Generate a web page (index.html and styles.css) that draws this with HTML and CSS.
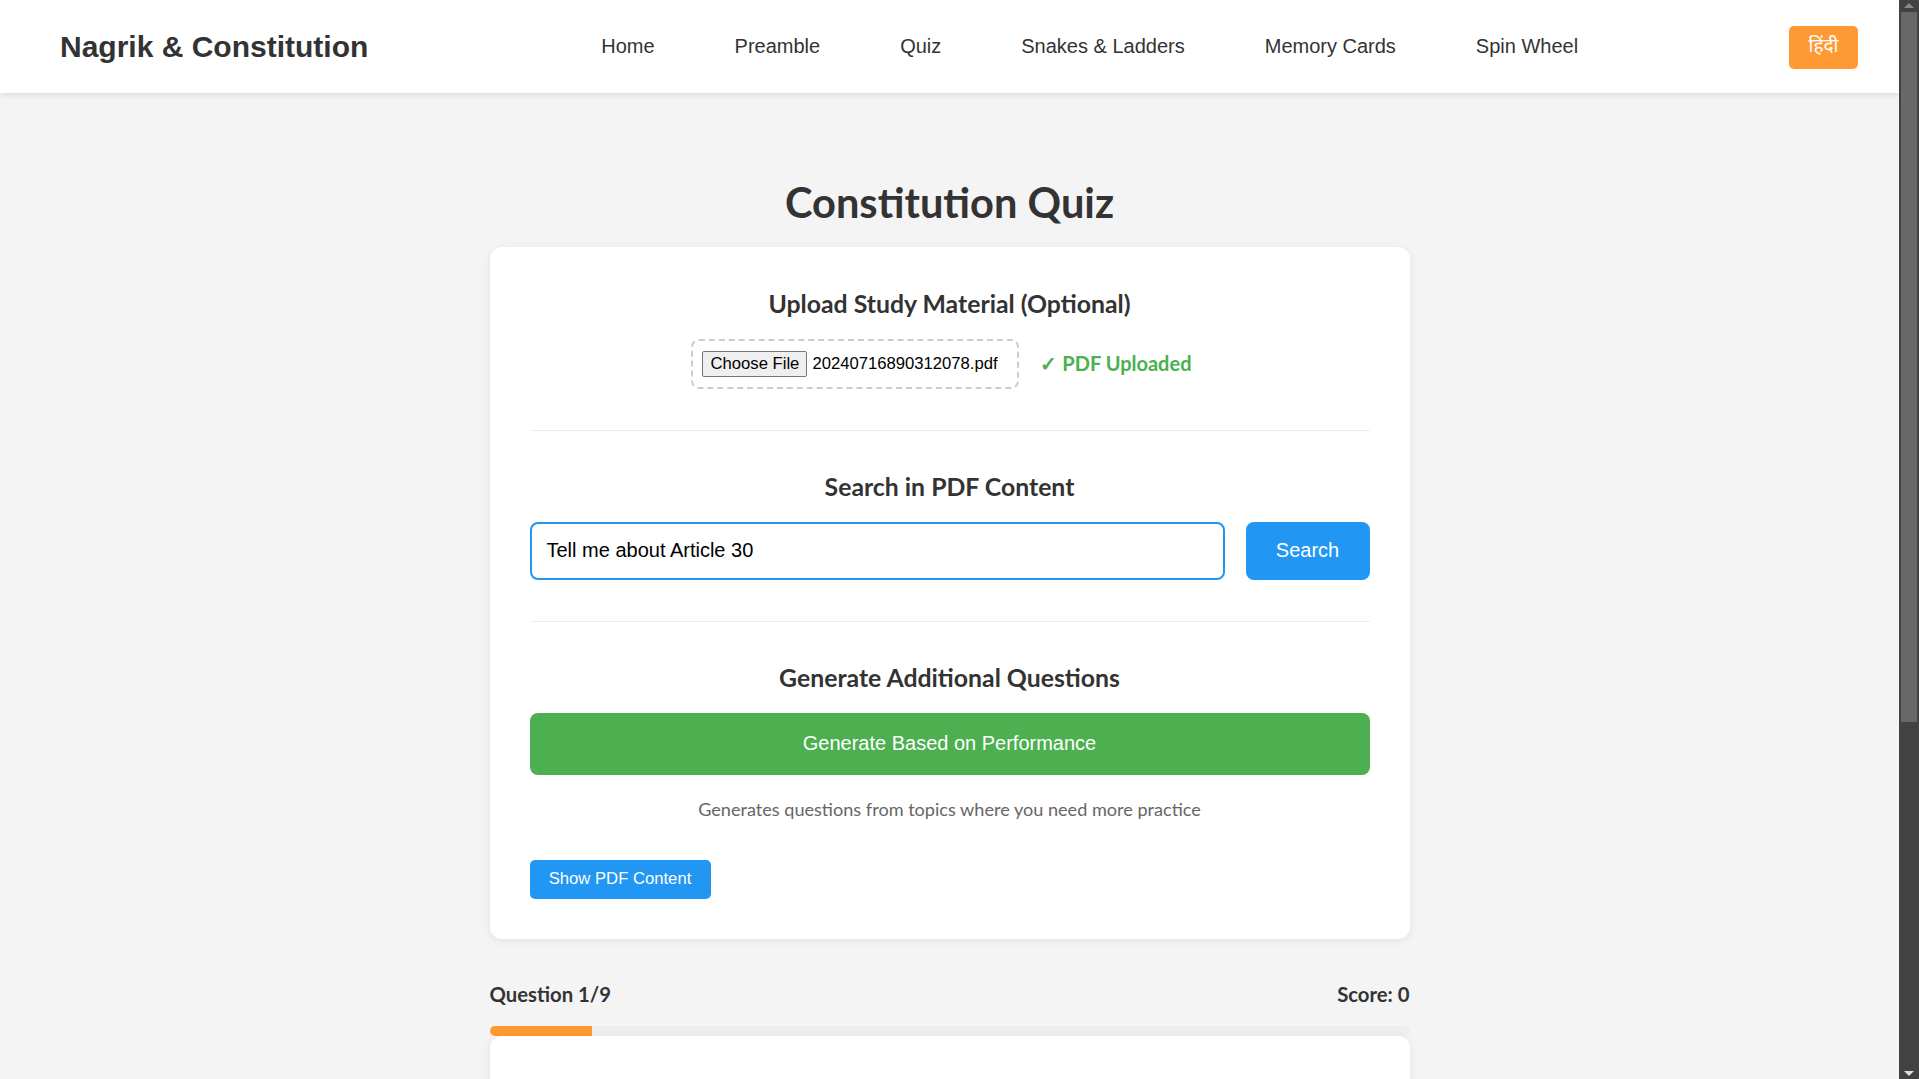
FILE: index.html
```html
<!DOCTYPE html>
<html lang="en">
<head>
<meta charset="utf-8">
<title>Constitution Quiz</title>
<link rel="stylesheet" href="styles.css">
</head>
<body>
<header class="topbar">
  <div class="logo">Nagrik &amp; Constitution</div>
  <nav class="nav">
    <a href="#">Home</a>
    <a href="#">Preamble</a>
    <a href="#">Quiz</a>
    <a href="#">Snakes &amp; Ladders</a>
    <a href="#">Memory Cards</a>
    <a href="#">Spin Wheel</a>
  </nav>
  <button class="lang-btn">हिंदी</button>
</header>

<main class="page">
  <h1 class="title">Constitution Quiz</h1>

  <section class="card">
    <div class="section">
      <h3 class="sec-title">Upload Study Material (Optional)</h3>
      <div class="upload-row">
        <div class="file-box">
          <span class="file-btn">Choose File</span>
          <span class="file-name">20240716890312078.pdf</span>
        </div>
        <span class="uploaded">✓ PDF Uploaded</span>
      </div>
    </div>

    <div class="section">
      <h3 class="sec-title">Search in PDF Content</h3>
      <div class="search-row">
        <div class="search-input">Tell me about Article 30</div>
        <button class="search-btn">Search</button>
      </div>
    </div>

    <div class="section last">
      <h3 class="sec-title">Generate Additional Questions</h3>
      <button class="gen-btn">Generate Based on Performance</button>
      <p class="hint">Generates questions from topics where you need more practice</p>
      <button class="show-btn">Show PDF Content</button>
    </div>
  </section>

  <div class="status-row">
    <span>Question 1/9</span>
    <span>Score: 0</span>
  </div>
  <div class="progress"><div class="progress-fill" style="width: 11.11%"></div></div>
  <section class="question-card"></section>
</main>

<div class="scrollbar" aria-hidden="true">
  <span class="sb-arrow up"></span>
  <span class="sb-thumb"></span>
  <span class="sb-arrow down"></span>
</div>
</body>
</html>
```
FILE: styles.css
```css
html { background: #f4f4f4; }

body {
  margin: 0 20px 0 0;
  background: #f4f4f4;
  color: #333;
  font-family: Lato, "Open Sans", sans-serif;
}

/* simulated browser scrollbar (overlay) */
.scrollbar {
  position: fixed;
  top: 0;
  right: 0;
  width: 20px;
  height: 100vh;
  background: #424242;
}
.sb-thumb {
  position: absolute;
  top: 12px;
  left: 2px;
  right: 2px;
  height: 710px;
  background: #686868;
}
.sb-arrow {
  position: absolute;
  left: 5px;
  width: 0;
  height: 0;
  border-left: 5px solid transparent;
  border-right: 5px solid transparent;
}
.sb-arrow.up { top: 3px; border-bottom: 5px solid #8a8a8a; }
.sb-arrow.down { bottom: 3px; border-top: 5px solid #e0e0e0; }

.topbar {
  height: 93px;
  background: #fff;
  display: flex;
  align-items: center;
  justify-content: space-between;
  padding: 0 41px 0 60px;
  box-shadow: 0 2px 6px rgba(0,0,0,0.1);
  font-family: "Liberation Sans", Arial, sans-serif;
}
.logo { font-size: 30px; font-weight: bold; color: #333; }
.nav { display: flex; gap: 80px; margin-left: 22px; }
.nav a { color: #333; text-decoration: none; font-size: 20px; }
.lang-btn {
  background: #ff9933;
  color: #fff;
  border: none;
  border-radius: 5px;
  width: 69px;
  height: 43px;
  margin-top: 2px;
  font-size: 19px;
  font-family: "Noto Sans Devanagari", "Noto Sans", sans-serif;
  padding: 0;
}

.page { width: 920px; margin: 0 auto; }
.title {
  font-size: 41.6px;
  line-height: 48px;
  text-align: center;
  margin: 85px 0 21px;
  color: #333;
  font-weight: 700;
}

.card {
  background: #fff;
  border-radius: 12px;
  padding: 40px;
  box-shadow: 0 2px 8px rgba(0,0,0,0.08);
}
.section { padding: 0 0 41px; border-bottom: 1px solid #eee; margin-bottom: 39.5px; }
.section.last { padding-bottom: 0; border-bottom: none; margin-bottom: 0; }
.sec-title {
  margin: 0 0 18.5px;
  font-size: 24.8px;
  line-height: 33px;
  text-align: center;
  font-weight: 700;
  color: #333;
}

.upload-row { display: flex; justify-content: center; align-items: center; gap: 21px; padding-right: 16px; }
.file-box {
  display: flex;
  align-items: center;
  width: 328px;
  height: 50px;
  box-sizing: border-box;
  border: 2px dashed #ccc;
  border-radius: 8px;
  padding: 0 9px;
  font-family: "Liberation Sans", Arial, sans-serif;
  font-size: 16.67px;
  color: #000;
}
.file-btn {
  background: #efefef;
  border: 1px solid #767676;
  border-radius: 2px;
  padding: 2px 7px;
  line-height: 20px;
  margin-right: 5px;
}
.uploaded { color: #4caf50; font-weight: 700; font-size: 20px; }

.search-row { display: flex; gap: 21px; }
.search-input {
  flex: 1;
  height: 58px;
  box-sizing: border-box;
  border: 2px solid #2196f3;
  border-radius: 8px;
  padding: 0 15px;
  display: flex;
  align-items: center;
  font-family: "Liberation Sans", Arial, sans-serif;
  font-size: 20px;
  color: #000;
}
.search-btn {
  width: 124px;
  height: 58px;
  background: #2196f3;
  color: #fff;
  border: none;
  border-radius: 8px;
  font-family: "Liberation Sans", Arial, sans-serif;
  font-size: 20px;
}

.gen-btn {
  display: block;
  width: 100%;
  height: 62px;
  background: #4caf50;
  color: #fff;
  border: none;
  border-radius: 8px;
  font-family: "Liberation Sans", Arial, sans-serif;
  font-size: 20px;
}
.hint {
  text-align: center;
  color: #666;
  font-size: 18.1px;
  line-height: 24px;
  margin: 22px 0 39px;
}
.show-btn {
  display: block;
  width: 181px;
  height: 39px;
  background: #2196f3;
  color: #fff;
  border: none;
  border-radius: 5px;
  font-family: "Liberation Sans", Arial, sans-serif;
  font-size: 16.67px;
  padding: 0;
}

.status-row {
  display: flex;
  justify-content: space-between;
  margin-top: 41px;
  font-weight: 700;
  font-size: 20.3px;
  line-height: 28px;
  color: #333;
}
.progress {
  margin-top: 18px;
  height: 10px;
  background: #eee;
  border-radius: 5px;
  overflow: hidden;
}
.progress-fill { height: 100%; background: #ff9933; }
.question-card {
  background: #fff;
  border-radius: 12px;
  height: 520px;
  margin-bottom: 30px;
  box-shadow: 0 2px 8px rgba(0,0,0,0.08);
}
```
